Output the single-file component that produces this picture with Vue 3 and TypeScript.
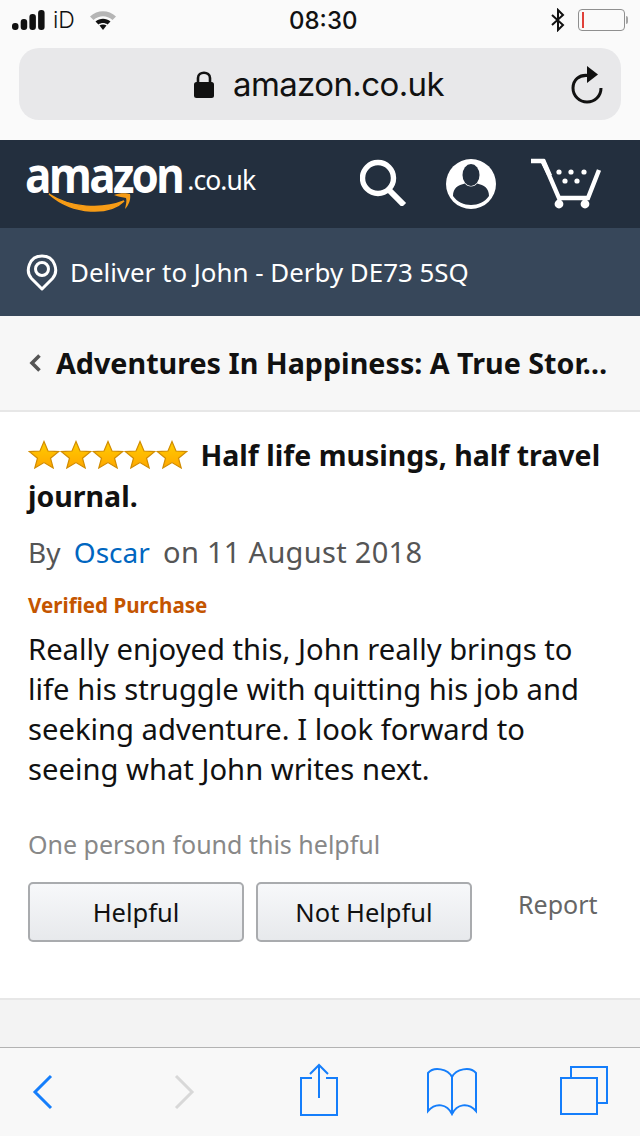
<script setup lang="ts">
const reviewLines = "Really enjoyed this, John really brings to life his struggle with quitting his job and seeking adventure. I look forward to seeing what John writes next.";
const stars = [1, 2, 3, 4, 5];
const cartDots = [[29, 14], [41, 14], [54, 14], [35, 23], [47, 23]];
</script>

<template>
  <div class="page">
    <div class="browser-top">
      <div class="status">
        <div class="status-left">
          <svg class="signal" width="33" height="20" viewBox="0 0 33 20">
            <rect x="0" y="13" width="6.5" height="7" rx="3" />
            <rect x="8.7" y="9" width="6.5" height="11" rx="3" />
            <rect x="17.4" y="4" width="6.5" height="16" rx="3" />
            <rect x="26.1" y="0" width="6.5" height="20" rx="3" />
          </svg>
          <span class="carrier">iD</span>
          <svg class="wifi" width="28" height="20" viewBox="0 0 28 20">
            <path d="M1 6.5 C8.5 -0.5 19.5 -0.5 27 6.5 L23.5 10 C17.5 5 10.5 5 4.5 10 Z" fill="#b5b5b5" />
            <path d="M6.5 11.5 C11 7.8 17 7.8 21.5 11.5 L18.6 14.4 C15.8 12.4 12.2 12.4 9.4 14.4 Z" fill="#111" />
            <path d="M10.5 15.6 C12.6 14.2 15.4 14.2 17.5 15.6 L14 20 Z" fill="#111" />
          </svg>
        </div>
        <span class="time">08:30</span>
        <div class="status-right">
          <svg width="16" height="24" viewBox="0 0 16 24" fill="none" stroke="#111" stroke-width="2">
            <path d="M2 7 L13 17 L8 22 L8 2 L13 7 L2 17" />
          </svg>
          <div class="battery"><div class="battery-level"></div></div>
          <div class="battery-nub"></div>
        </div>
      </div>
      <div class="url-bar">
        <svg class="lock" width="20" height="28" viewBox="0 0 20 28">
          <path d="M4 13 V8 C4 1 16 1 16 8 V13" fill="none" stroke="#111" stroke-width="2.6" />
          <rect x="0" y="12" width="20" height="16" rx="2.5" fill="#111" />
        </svg>
        <span class="url-text">amazon.co.uk</span>
        <svg class="reload" width="32" height="38" viewBox="0 0 32 38" fill="none">
          <path d="M17 9.5 C8 8.5 2 14 2 22 C2 30 8.5 36 16 36 C24 36 30 30 30 22" stroke="#111" stroke-width="3" />
          <path d="M16 0 L27 8.5 L16 17 Z" fill="#111" />
        </svg>
      </div>
    </div>

    <header class="nav">
      <div class="logo">
        <span class="logo-word">amazon</span><span class="logo-tld">.co.uk</span>
        <svg class="smile" width="86" height="22" viewBox="0 0 86 22" fill="none">
          <path d="M1 2 C22 16 54 18 76 9 C62 23 26 24 1 2 Z" fill="#f79c16" stroke="#f79c16" stroke-width="1.5" />
          <path d="M66 3 C71 1 78 1 82 2 C83 7 81 13 77 17 C78 12 79 9 78 6 C75 5 71 5 66 3 Z" fill="#f79c16" />
        </svg>
      </div>
      <div class="nav-icons">
        <svg class="icon-search" width="48" height="48" viewBox="0 0 48 48" fill="none" stroke="#fff">
          <circle cx="18" cy="20" r="15.5" stroke-width="5.4" />
          <path d="M29 32 L44 47" stroke-width="6" />
        </svg>
        <svg class="icon-user" width="52" height="52" viewBox="0 0 52 52">
          <circle cx="26" cy="26" r="25" fill="#fff" />
          <ellipse cx="26" cy="17" rx="8.5" ry="11" fill="#232f3e" />
          <path d="M8 38 C8 30 13 27 20 25.5 C22 29.5 30 29.5 32 25.5 C39 27 44 30 44 38 C40 44 33 47 26 47 C19 47 12 44 8 38 Z" fill="#232f3e" />
        </svg>
        <svg class="icon-cart" width="72" height="52" viewBox="0 0 72 52" fill="none">
          <path d="M1 3 H13 L29 40 H58 L69 12" stroke="#fff" stroke-width="4.4" />
          <path d="M1 1 H15 L22 17 L17 17 L11 5 H1 Z" fill="#fff" />
          <circle cx="29" cy="46" r="4.4" fill="#fff" />
          <circle cx="55" cy="46" r="4.4" fill="#fff" />
          <circle v-for="d in cartDots" :key="d[0]" :cx="d[0]" :cy="d[1]" r="2.6" fill="#fff" />
        </svg>
      </div>
    </header>

    <div class="deliver">
      <svg width="32" height="37" viewBox="0 0 32 37" fill="none" stroke="#fff">
        <path d="M16 35 L5.5 24.5 C-1 17 3 2 16 2 C29 2 33 17 26.5 24.5 Z" stroke-width="3" stroke-linejoin="round" />
        <circle cx="16" cy="15" r="6.5" stroke-width="3" />
      </svg>
      <span>Deliver to John - Derby DE73 5SQ</span>
    </div>

    <div class="title-row">
      <svg width="12" height="18" viewBox="0 0 12 18" fill="none">
        <path d="M10.5 1.5 L3 9 L10.5 16.5" stroke="#555" stroke-width="3.6" />
      </svg>
      <span class="book-title">Adventures In Happiness: A True Stor…</span>
    </div>

    <main class="review">
      <div class="review-title">
        <span class="stars">
          <svg v-for="s in stars" :key="s" width="32" height="29" viewBox="0 0 32 29">
            <defs>
              <linearGradient :id="'star' + s" x1="0" y1="0" x2="0" y2="1">
                <stop offset="0" stop-color="#ffce00" />
                <stop offset="1" stop-color="#ffa700" />
              </linearGradient>
            </defs>
            <path d="M16 1.5 L20 11 L30.5 11.6 L22.5 18.2 L25.2 28 L16 22.6 L6.8 28 L9.5 18.2 L1.5 11.6 L12 11 Z" :fill="'url(#star' + s + ')'" stroke="#d18c00" stroke-width="1.2" />
          </svg>
        </span>
        Half life musings, half travel journal.
      </div>
      <div class="byline">By <a class="author">Oscar</a> <span class="date">on 11 August 2018</span></div>
      <div class="verified">Verified Purchase</div>
      <p class="body">{{ reviewLines }}</p>
      <div class="helpful-count">One person found this helpful</div>
      <div class="actions">
        <button class="vote">Helpful</button>
        <button class="vote">Not Helpful</button>
        <span class="report">Report</span>
      </div>
    </main>

    <div class="gap"></div>

    <footer class="toolbar">
      <svg width="22" height="36" viewBox="0 0 22 36" fill="none" stroke="#157efb" stroke-width="3">
        <path d="M19 2 L3 18 L19 34" />
      </svg>
      <svg class="tool-forward" width="22" height="36" viewBox="0 0 22 36" fill="none" stroke="#d8d8d8" stroke-width="3">
        <path d="M3 2 L19 18 L3 34" />
      </svg>
      <svg class="tool-share" width="40" height="54" viewBox="0 0 40 54" fill="none" stroke="#157efb" stroke-width="2">
        <path d="M13 15 H2 V52 H38 V15 H27" />
        <path d="M20 35 V2 M11 11 L20 2 L29 11" />
      </svg>
      <svg class="tool-book" width="52" height="50" viewBox="0 0 52 50" fill="none" stroke="#157efb" stroke-width="2">
        <path d="M26 10 C22 2 8 -1 2 6 V44 C10 35 21 37 26 47 C31 37 42 35 50 44 V6 C44 -1 30 2 26 10 Z" />
        <path d="M26 10 V47" />
      </svg>
      <svg class="tool-tabs" width="48" height="50" viewBox="0 0 48 50" fill="none" stroke="#157efb" stroke-width="2">
        <path d="M11 11 V1 H47 V37 H37" />
        <rect x="1" y="12" width="36" height="36" />
      </svg>
    </footer>
  </div>
</template>

<style>
html,
body {
  margin: 0;
  background: #fff;
}
</style>

<style scoped>
.page {
  width: 640px;
  height: 1136px;
  overflow: hidden;
  display: flex;
  flex-direction: column;
  font-family: "Noto Sans", "Liberation Sans", sans-serif;
  color: #111;
}

.browser-top {
  height: 140px;
  box-sizing: border-box;
  background: #fafafa;
}

.status {
  height: 48px;
  display: flex;
  align-items: center;
  justify-content: space-between;
  position: relative;
  padding: 0 12px;
  font-family: Inter, "Liberation Sans", sans-serif;
}

.status-left,
.status-right {
  display: flex;
  align-items: center;
  margin-top: -8px;
}

.signal {
  fill: #111;
}

.carrier {
  margin-left: 8px;
  font-size: 23px;
  font-weight: 300;
}

.wifi {
  margin-left: 14px;
}

.time {
  position: absolute;
  left: 289px;
  top: 6px;
  font-size: 24px;
  font-weight: 500;
  line-height: 30px;
}

.battery {
  width: 39px;
  height: 16px;
  margin-left: 12px;
  border: 1px solid #8f8f8f;
  border-radius: 4px;
  padding: 2px 3px;
  box-sizing: content-box;
}

.battery-level {
  width: 2px;
  height: 100%;
  background: #e0413a;
}

.battery-nub {
  width: 2px;
  height: 8px;
  margin-left: 1px;
  background: #a5a5a5;
  border-radius: 0 2px 2px 0;
}

.url-bar {
  height: 72px;
  margin: 0 19px;
  position: relative;
  display: flex;
  align-items: center;
  justify-content: center;
  gap: 19px;
  background: #e8e8ea;
  border-radius: 20px;
  padding-right: 2px;
}

.url-text {
  font-family: Inter, "Liberation Sans", sans-serif;
  font-size: 33px;
  letter-spacing: -0.6px;
}

.reload {
  position: absolute;
  right: 18px;
  top: 18px;
}

.nav {
  height: 88px;
  box-sizing: border-box;
  background: #232f3e;
  display: flex;
  align-items: center;
  justify-content: space-between;
  padding: 0 38px 0 25px;
}

.logo {
  position: relative;
  height: 70px;
  margin-top: -8px;
  color: #fff;
  white-space: nowrap;
  line-height: 56px;
}

.logo-word {
  display: inline-block;
  font-family: "Open Sans", sans-serif;
  font-size: 44px;
  font-weight: 700;
  letter-spacing: -2.8px;
  transform: scaleY(1.15);
}

.logo-tld {
  margin-left: 5px;
  font-size: 26.5px;
  font-weight: 400;
  letter-spacing: -0.9px;
}

.smile {
  position: absolute;
  left: 23px;
  top: 47px;
}

.nav-icons {
  display: flex;
  align-items: center;
}

.icon-search {
  margin-top: -4px;
}

.icon-user {
  margin-left: 37px;
}

.icon-cart {
  margin-left: 33px;
}

.deliver {
  height: 88px;
  box-sizing: border-box;
  background: #37475a;
  color: #fff;
  display: flex;
  align-items: center;
  gap: 12px;
  padding-left: 26px;
  font-size: 25.9px;
}

.title-row {
  height: 96px;
  box-sizing: border-box;
  background: #f7f7f7;
  border-bottom: 2px solid #e7e7e7;
  display: flex;
  align-items: center;
  gap: 15px;
  padding: 0 0 0 29px;
}

.book-title {
  font-size: 28.7px;
  font-weight: 700;
  white-space: nowrap;
  line-height: 40px;
}

.review {
  flex: 1;
  padding: 23px 28px 0;
  background: #fff;
  border-bottom: 2px solid #e7e7e7;
}

.review-title {
  font-size: 28.5px;
  font-weight: 700;
  line-height: 41px;
}

.stars {
  display: inline-flex;
  vertical-align: -3px;
  margin-right: 5px;
}

.byline {
  margin-top: 15px;
  font-size: 28px;
  line-height: 40px;
  color: #555;
}

.author {
  color: #0066c0;
  margin: 0 6px;
}

.date {
  font-size: 29px;
  letter-spacing: 0.3px;
}

.verified {
  margin-top: 19px;
  font-size: 20.6px;
  line-height: 28px;
  font-weight: 700;
  color: #c45500;
}

.body {
  margin: 10px 0 0;
  font-size: 29.2px;
  line-height: 40px;
}

.helpful-count {
  margin-top: 35px;
  font-size: 25px;
  line-height: 40px;
  color: #888;
}

.actions {
  margin-top: 18px;
  display: flex;
  gap: 12px;
}

.vote {
  width: 216px;
  height: 60px;
  box-sizing: border-box;
  border: 2px solid #a9abae;
  border-radius: 5px;
  background: linear-gradient(#f7f8fa, #e7e9ec);
  font-family: inherit;
  font-size: 25.5px;
  color: #111;
  padding: 0;
}

.report {
  margin-left: 34px;
  margin-top: 4px;
  font-size: 25px;
  line-height: 36px;
  color: #666;
}

.gap {
  height: 47px;
  background: #f3f3f3;
  border-bottom: 1px solid #b2b2b2;
  flex: none;
}

.toolbar {
  height: 88px;
  flex: none;
  box-sizing: border-box;
  background: #f8f8f8;
  display: flex;
  align-items: center;
  padding: 0 0 0 32px;
}

.tool-forward {
  margin-left: 119px;
}

.tool-share {
  margin-left: 104px;
  margin-bottom: 5px;
}

.tool-book {
  margin-left: 87px;
}

.tool-tabs {
  margin-left: 82px;
  margin-bottom: 2px;
}
</style>
